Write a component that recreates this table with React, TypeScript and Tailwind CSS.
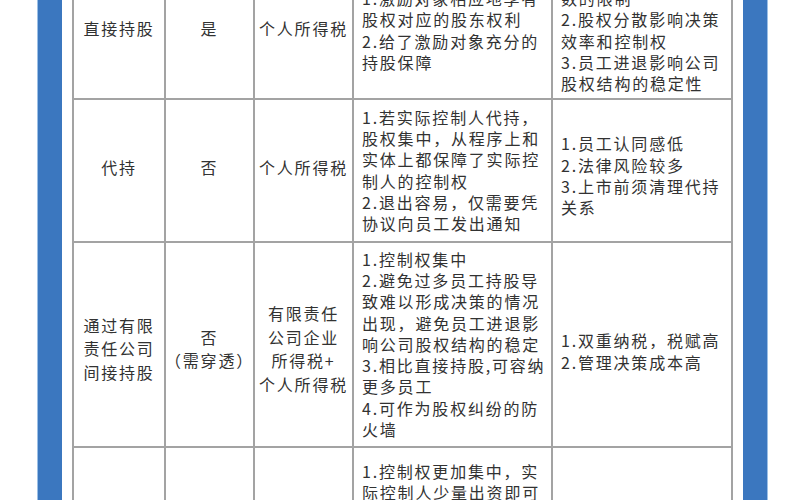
import React from "react";

type Cell = { lines: string[]; cls?: string };

const Center = ({ lines, cls = "" }: Cell) => (
  <div className={`bg-white flex flex-col items-center justify-center text-center leading-[23.5px] ${cls}`}>
    {lines.map((l, i) => (
      <div key={i} className="whitespace-nowrap">{l}</div>
    ))}
  </div>
);

const Left = ({ lines, cls = "" }: Cell) => (
  <div className={`bg-white flex flex-col justify-center pl-[8px] leading-[21.3px] ${cls}`}>
    {lines.map((l, i) => (
      <div key={i} className="whitespace-nowrap">{l}</div>
    ))}
  </div>
);

export default function App() {
  return (
    <div className="w-[800px] h-[500px] overflow-hidden bg-white flex items-start text-[16px] tracking-[1.8px] text-[#323232] font-['Noto_Sans_CJK_SC','Noto_Sans',sans-serif]">
      <div className="w-[37px] shrink-0" />
      <div className="w-[25px] h-[500px] shrink-0 bg-[#3b77bf] border-l border-[#9cc0e6]" />
      <div className="w-[10px] shrink-0" />
      <div className="-mt-[42px] shrink-0 grid grid-cols-[90px_87px_97px_197px_178px] grid-rows-[138px_141px_203px_220px] gap-[2px] p-[2px] bg-[#a3a3a3]">
        {/* row 1 */}
        <Center lines={["直接持股"]} />
        <Center lines={["是"]} />
        <Center lines={["个人所得税"]} />
        <Left
          cls="pt-[3px]"
          lines={["1.激励对象相应地享有", "股权对应的股东权利", "2.给了激励对象充分的", "持股保障"]}
        />
        <Left
          cls="pt-[3px]"
          lines={["1.受公司法对股东人", "数的限制", "2.股权分散影响决策", "效率和控制权", "3.员工进退影响公司", "股权结构的稳定性"]}
        />
        {/* row 2 */}
        <Center cls="pb-[5px]" lines={["代持"]} />
        <Center cls="pb-[5px]" lines={["否"]} />
        <Center cls="pb-[5px]" lines={["个人所得税"]} />
        <Left
          lines={[
            "1.若实际控制人代持，",
            "股权集中，从程序上和",
            "实体上都保障了实际控",
            "制人的控制权",
            "2.退出容易，仅需要凭",
            "协议向员工发出通知",
          ]}
        />
        <Left cls="pt-[11px]" lines={["1.员工认同感低", "2.法律风险较多", "3.上市前须清理代持", "关系"]} />
        {/* row 3 */}
        <Center cls="pt-[9px]" lines={["通过有限", "责任公司", "间接持股"]} />
        <Center cls="pt-[9px]" lines={["否", "（需穿透）"]} />
        <Center cls="pt-[9px]" lines={["有限责任", "公司企业", "所得税+", "个人所得税"]} />
        <Left
          lines={[
            "1.控制权集中",
            "2.避免过多员工持股导",
            "致难以形成决策的情况",
            "出现，避免员工进退影",
            "响公司股权结构的稳定",
            "3.相比直接持股,可容纳",
            "更多员工",
            "4.可作为股权纠纷的防",
            "火墙",
          ]}
        />
        <Left cls="pt-[14px]" lines={["1.双重纳税，税赋高", "2.管理决策成本高"]} />
        {/* row 4 */}
        <div className="bg-white" />
        <div className="bg-white" />
        <div className="bg-white" />
        <div className="bg-white flex flex-col justify-start pl-[8px] pt-[13px] leading-[21.3px]">
          <div className="whitespace-nowrap">1.控制权更加集中，实</div>
          <div className="whitespace-nowrap">际控制人少量出资即可</div>
          <div className="whitespace-nowrap">控制持股平台</div>
        </div>
        <div className="bg-white" />
      </div>
      <div className="w-[10px] shrink-0" />
      <div className="w-[25px] h-[500px] shrink-0 bg-[#3b77bf] border-r border-[#9cc0e6]" />
    </div>
  );
}
